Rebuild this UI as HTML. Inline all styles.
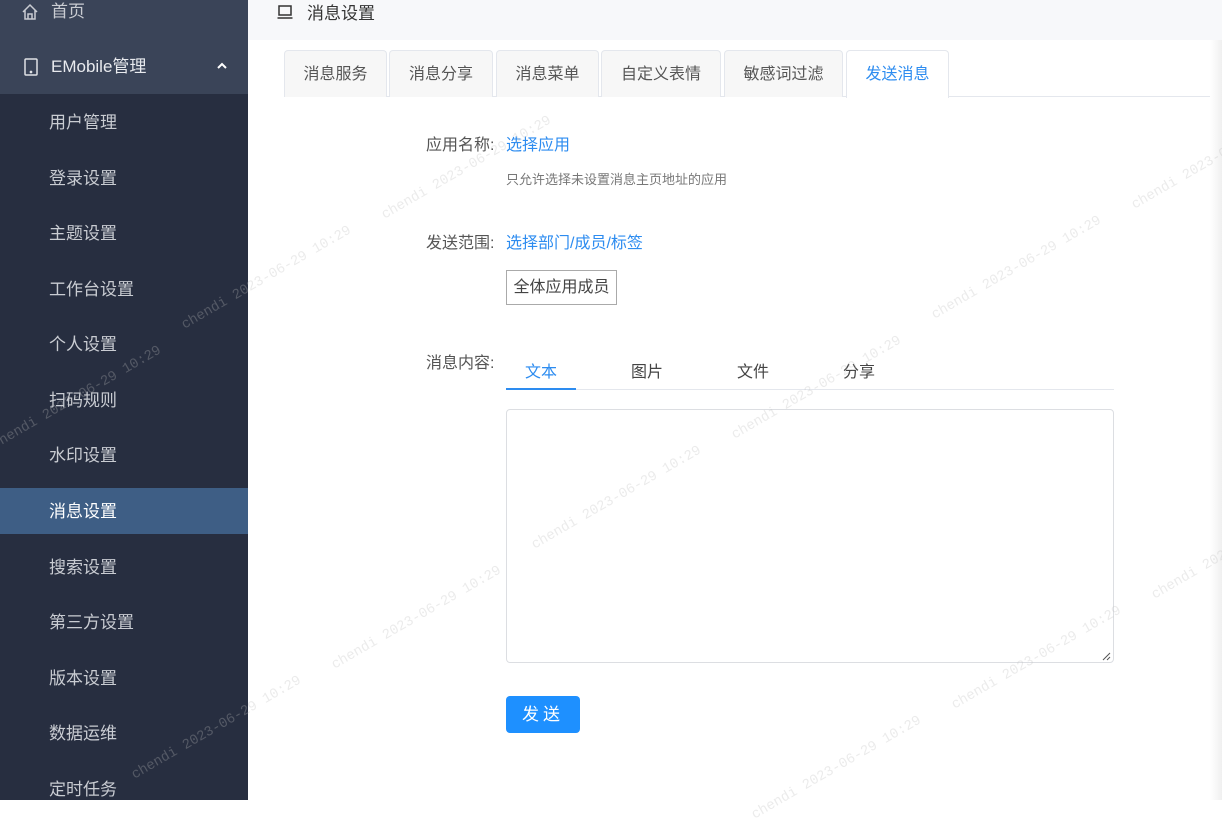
<!DOCTYPE html>
<html><head><meta charset="utf-8"><style>
*{margin:0;padding:0;box-sizing:border-box}
body{width:1222px;height:800px;overflow:hidden;position:relative;background:#fff;font-family:"Liberation Sans","Noto Sans CJK SC",sans-serif;color:#333}
.a{position:absolute;white-space:nowrap}
#sb{position:absolute;left:0;top:0;width:248px;height:800px;background:#272e40}
#sbt{position:absolute;left:0;top:0;width:248px;height:94px;background:#3a4458}
.it{position:absolute;left:49px;font-size:17px;color:#c9ccd2;line-height:20px}
.tab{position:absolute;top:50px;height:47px;border:1px solid #e4e7ed;border-bottom:none;border-radius:4px 4px 0 0;background:#f7f7f7;font-size:16px;color:#555;text-align:center;line-height:48px}
.wm{position:absolute;font-family:"Liberation Mono",monospace;font-size:14px;color:rgba(190,190,190,.3);transform:rotate(-30deg);white-space:nowrap}
</style></head><body>
<div id="sb"><div id="sbt"></div>
<svg class="a" style="left:21px;top:3px" width="18" height="18" viewBox="0 0 18 18" fill="none" stroke="#c9ccd2" stroke-width="1.5"><path d="M2 9 L9 2 L16 9 M4 7 V16 H14 V7 M7 16 V11 H11 V16"/></svg>
<div class="it" style="top:2px;left:51px">首页</div>
<svg class="a" style="left:24px;top:58px" width="14" height="18" viewBox="0 0 14 18" fill="none" stroke="#e0e2e6" stroke-width="1.5"><rect x="1" y="1" width="12" height="16" rx="1"/><circle cx="7" cy="14" r=".6" fill="#e0e2e6"/></svg>
<div class="it" style="top:57px;left:51px;color:#e8eaee">EMobile管理</div>
<svg class="a" style="left:216px;top:62px" width="12" height="8" viewBox="0 0 12 8" fill="none" stroke="#fff" stroke-width="2"><path d="M2 6 L6 2 L10 6"/></svg>
<div class="a" style="left:0;top:488px;width:248px;height:46px;background:#3e5e85"></div>
<div class="it" style="top:113px">用户管理</div>
<div class="it" style="top:169px">登录设置</div>
<div class="it" style="top:224px">主题设置</div>
<div class="it" style="top:280px">工作台设置</div>
<div class="it" style="top:335px">个人设置</div>
<div class="it" style="top:391px">扫码规则</div>
<div class="it" style="top:446px">水印设置</div>
<div class="it" style="top:502px;color:#fff">消息设置</div>
<div class="it" style="top:558px">搜索设置</div>
<div class="it" style="top:613px">第三方设置</div>
<div class="it" style="top:669px">版本设置</div>
<div class="it" style="top:724px">数据运维</div>
<div class="it" style="top:780px">定时任务</div>
</div>
<div class="a" style="left:248px;top:0;width:974px;height:40px;background:#f7f8fa"></div>
<svg class="a" style="left:277px;top:5px" width="16" height="14" viewBox="0 0 16 14" fill="none" stroke="#333" stroke-width="1.5"><rect x="2" y="1" width="12" height="9"/><path d="M0.5 13 H15.5"/></svg>
<div class="a" style="left:307px;top:-1px;font-size:17px;color:#333">消息设置</div>
<div class="a" style="left:1210px;top:40px;width:12px;height:760px;background:linear-gradient(90deg,#fff,#f0f0f0)"></div>
<div class="a" style="left:284px;top:96px;width:926px;height:1px;background:#e4e7ed"></div>
<div class="tab" style="left:284px;width:103px">消息服务</div>
<div class="tab" style="left:389px;width:104px">消息分享</div>
<div class="tab" style="left:496px;width:103px">消息菜单</div>
<div class="tab" style="left:601px;width:120px">自定义表情</div>
<div class="tab" style="left:724px;width:119px">敏感词过滤</div>
<div class="tab" style="left:846px;width:103px;background:#fff;color:#2d8cf0;height:48px">发送消息</div>
<div class="a" style="left:426px;top:131px;font-size:16px;color:#555">应用名称:</div>
<div class="a" style="left:506px;top:131px;font-size:16px;color:#2d8cf0">选择应用</div>
<div class="a" style="left:506px;top:169px;font-size:13px;color:#777">只允许选择未设置消息主页地址的应用</div>
<div class="a" style="left:426px;top:229px;font-size:16px;color:#555">发送范围:</div>
<div class="a" style="left:506px;top:229px;font-size:16px;color:#2d8cf0">选择部门/成员/标签</div>
<div class="a" style="left:506px;top:270px;width:111px;height:35px;border:1px solid #aaa;font-size:16px;color:#444;line-height:33px;text-align:center">全体应用成员</div>
<div class="a" style="left:426px;top:349px;font-size:16px;color:#555">消息内容:</div>
<div class="a" style="left:506px;top:389px;width:608px;height:1px;background:#e4e7ed"></div>
<div class="a" style="left:506px;top:388px;width:70px;height:2px;background:#2d8cf0"></div>
<div class="a" style="left:525px;top:358px;font-size:16px;color:#2d8cf0">文本</div>
<div class="a" style="left:631px;top:358px;font-size:16px;color:#444">图片</div>
<div class="a" style="left:737px;top:358px;font-size:16px;color:#444">文件</div>
<div class="a" style="left:843px;top:358px;font-size:16px;color:#444">分享</div>
<div class="a" style="left:506px;top:409px;width:608px;height:254px;border:1px solid #dcdee2;border-radius:4px"></div>
<svg class="a" style="left:1101px;top:651px" width="10" height="10" viewBox="0 0 10 10" stroke="#555" stroke-width="1"><path d="M2 9 L9 2 M6 9 L9 6"/></svg>
<div class="a" style="left:506px;top:696px;width:74px;height:37px;background:#1e90ff;border-radius:4px;color:#fff;font-size:17px;line-height:37px;text-align:center;letter-spacing:4px">发送</div>
<div class="wm" style="left:370px;top:160px">chendi 2023-06-29 10:29</div>
<div class="wm" style="left:170px;top:270px">chendi 2023-06-29 10:29</div>
<div class="wm" style="left:-20px;top:390px">chendi 2023-06-29 10:29</div>
<div class="wm" style="left:920px;top:260px">chendi 2023-06-29 10:29</div>
<div class="wm" style="left:1120px;top:150px">chendi 2023-06-29 10:29</div>
<div class="wm" style="left:720px;top:380px">chendi 2023-06-29 10:29</div>
<div class="wm" style="left:520px;top:490px">chendi 2023-06-29 10:29</div>
<div class="wm" style="left:320px;top:610px">chendi 2023-06-29 10:29</div>
<div class="wm" style="left:120px;top:720px">chendi 2023-06-29 10:29</div>
<div class="wm" style="left:940px;top:650px">chendi 2023-06-29 10:29</div>
<div class="wm" style="left:740px;top:760px">chendi 2023-06-29 10:29</div>
<div class="wm" style="left:1140px;top:540px">chendi 2023-06-29 10:29</div>
</body></html>
